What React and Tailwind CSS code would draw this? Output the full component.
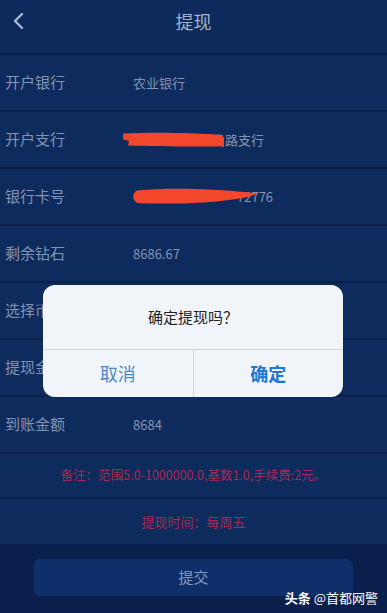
import React from 'react'

const FONT = { fontFamily: '"Noto Sans CJK SC", "Noto Sans", sans-serif' }

// one form line: label on the left, value from x=133
function Row({ label, children }) {
  return (
    <div className="relative flex items-center h-[57px] border-b-2 border-[#0a2049]">
      <span className="w-[133px] pl-[5px] text-[15px] text-[#8393b3]">{label}</span>
      <div className="relative text-[13px] text-[#8393b3]">{children}</div>
    </div>
  )
}

function Scribble({ className, d }) {
  return (
    <svg className={className} viewBox="0 0 100 20" preserveAspectRatio="none">
      <path d={d} fill="#f2472a" />
    </svg>
  )
}

export default function App() {
  return (
    <div style={FONT} className="relative w-[387px] h-[613px] overflow-hidden bg-[#0d2b5c]">
      {/* header */}
      <div className="relative h-[55px] border-b-2 border-[#0a2049] bg-[#0c2a5b]">
        <div className="flex items-center justify-center h-[42px]">
          <svg className="absolute left-[12px] top-[12px]" width="14" height="18" viewBox="0 0 14 18">
            <path d="M10 2 L3 9 L10 16" fill="none" stroke="#a8b6d0" strokeWidth="2.4" strokeLinecap="round" strokeLinejoin="round" />
          </svg>
          <span className="text-[18px] text-[#a7b2c8]">提现</span>
        </div>
      </div>

      <Row label="开户银行">农业银行</Row>
      <Row label="开户支行">
        <span className="pl-[79px]">山路支行</span>
        <Scribble className="absolute left-[-10px] top-[2px] w-[100px] h-[15px]" d="M0 2 C30 0 70 1 100 4 L100 19 C70 20 30 19 5 18 L6 12 L0 10 Z" />
      </Row>
      <Row label="银行卡号">
        <span className="pl-[104px]">72776</span>
        <Scribble className="absolute left-0 top-[1px] w-[125px] h-[16px]" d="M3 3 C30 -1 70 1 100 7 C85 17 40 21 4 19 C-1 15 -1 7 3 3 Z" />
      </Row>
      <Row label="剩余钻石">8686.67</Row>
      <Row label="选择币种"></Row>
      <Row label="提现金额"></Row>
      <Row label="到账金额">8684</Row>

      {/* remarks */}
      <div className="flex items-center justify-center h-[45px] border-b-2 border-[#0a2049] text-[12.5px] text-[#a82a52]">
        备注：范围5.0-1000000.0,基数1.0,手续费:2元。
      </div>
      <div className="flex items-center justify-center h-[45px] text-[13px] text-[#a82a52]">
        提现时间：每周五
      </div>

      {/* bottom band */}
      <div className="h-[70px] bg-[#0a1f4b] pt-[15px] px-[34px]">
        <div className="flex items-center justify-center h-[37px] rounded-md bg-[#0e2f6a] text-[15px] text-[#8798bb]">
          提交
        </div>
      </div>

      <div className="absolute right-[9px] bottom-[6px] text-[13px] text-white">
        <span className="font-bold">头条</span> @首都网警
      </div>

      {/* confirm dialog */}
      <div className="absolute left-[43px] top-[285px] w-[300px] h-[112px] rounded-[12px] bg-[#f1f5f9] overflow-hidden flex flex-col">
        <div className="flex items-center justify-center h-[64px] text-[15px] text-[#222]">确定提现吗？</div>
        <div className="flex flex-1 border-t border-[#cfd6de]">
          <div className="flex-1 flex items-center justify-center border-r border-[#cfd6de] text-[18px] text-[#4a8cc6]">取消</div>
          <div className="flex-1 flex items-center justify-center text-[18px] font-bold text-[#2077d2]">确定</div>
        </div>
      </div>
    </div>
  )
}
